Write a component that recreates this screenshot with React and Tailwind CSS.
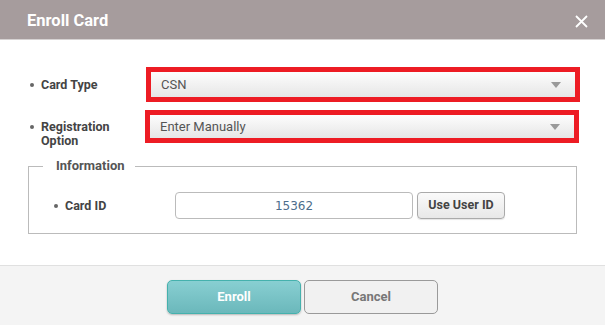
import React from 'react';

function SelectBox({ value, className }) {
  return (
    <div className={`border-[5px] border-[#ed1c24] ${className}`}>
      <div className="h-full flex items-center justify-between pl-[10px] pr-[14px] bg-gradient-to-b from-[#fdfdfd] to-[#e6e6e6] text-[13px] text-[#555]">
        <span>{value}</span>
        <span className="w-0 h-0 border-l-[5px] border-r-[5px] border-t-[6px] border-l-transparent border-r-transparent border-t-[#999]" />
      </div>
    </div>
  );
}

function Label({ children }) {
  return (
    <div className="flex items-start gap-[7px] text-[12.5px] font-bold text-[#444] leading-[14px]">
      <span className="w-[4px] mt-[5px] h-[4px] rounded-full bg-[#666] shrink-0" />
      <span>{children}</span>
    </div>
  );
}

export default function App() {
  return (
    <div className="w-[605px] h-[325px] bg-white flex flex-col font-['Roboto',sans-serif] overflow-hidden">
      {/* Header */}
      <div className="h-10 shrink-0 bg-[#a69c9d] border-b border-[#d6d2d2] flex items-center justify-between pl-[27px] pr-[17px]">
        <span className="text-white font-bold text-[16.5px] pt-[4px]">Enroll Card</span>
        <svg width="13" height="13" viewBox="0 0 13 13" className="mt-[3px]">
          <path d="M1 1 L12 12 M12 1 L1 12" stroke="white" strokeWidth="1.8" />
        </svg>
      </div>

      {/* Body */}
      <div className="flex-1 pt-[27px]">
        <div className="flex items-center pl-[30px]">
          <div className="w-[116px]"><Label>Card Type</Label></div>
          <SelectBox value="CSN" className="w-[434px] h-[35px]" />
        </div>
        <div className="flex items-center pl-[30px] mt-[8px]">
          <div className="w-[115px] pt-[7px] -mb-[7px]"><Label>Registration<br />Option</Label></div>
          <SelectBox value="Enter Manually" className="w-[434px] h-[33px]" />
        </div>

        <fieldset className="ml-[28px] w-[549px] mt-[15px] border border-[#bbb] pb-[14px] pt-[18px]">
          <legend className="ml-[14px] pl-[13px] pr-[10px] text-[13px] font-bold text-[#555] leading-[16px]">Information</legend>
          <div className="flex items-center pl-[25px]">
            <div className="w-[121px]"><Label>Card ID</Label></div>
            <div className="w-[238px] h-[27px] border border-[#bbb] rounded-[4px] flex items-center justify-center text-[12px] text-[#4c6d8c] font-['DejaVu_Sans',sans-serif]">15362</div>
            <button className="ml-[4px] w-[88px] h-[27px] border border-[#aaa] rounded-[4px] bg-gradient-to-b from-[#fafafa] to-[#e8e8e8] text-[12.5px] font-bold text-[#444] shadow-[0_1px_1px_rgba(0,0,0,0.1)]">Use User ID</button>
          </div>
        </fieldset>
      </div>

      {/* Footer */}
      <div className="h-[60px] shrink-0 border-t border-[#e0e0e0] bg-[#f4f4f4] flex justify-center items-start pt-[14px] gap-[3px]">
        <button className="w-[134px] h-[34px] rounded-[5px] border border-[#45b1ad] bg-gradient-to-b from-[#88cfd2] to-[#6bb8bb] text-white font-bold text-[13px] shadow-[0_1px_2px_rgba(0,0,0,0.25)]">Enroll</button>
        <button className="w-[134px] h-[34px] rounded-[5px] border border-[#9a9a9a] bg-[#f1f1f1] text-[#777] font-bold text-[13px]">Cancel</button>
      </div>
    </div>
  );
}
